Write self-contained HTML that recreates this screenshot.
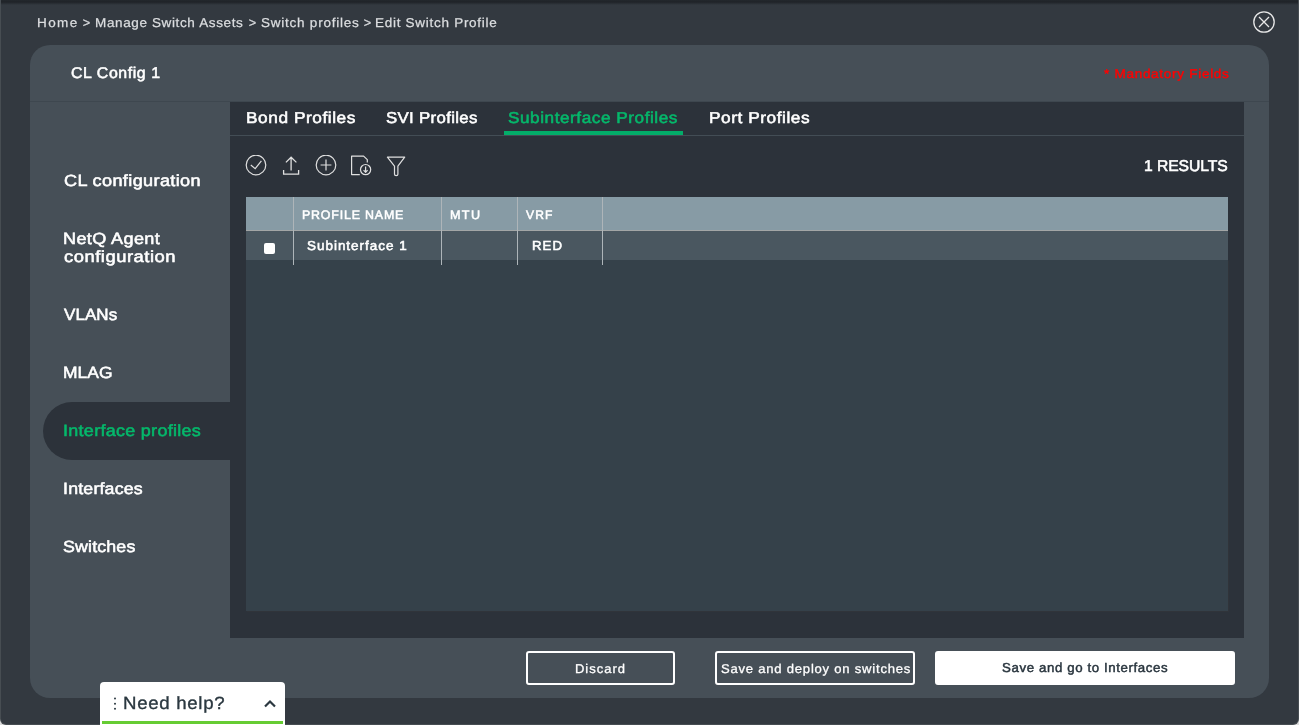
<!DOCTYPE html>
<html><head><meta charset="utf-8">
<style>
*{margin:0;padding:0;box-sizing:border-box;}
html,body{width:1299px;height:725px;overflow:hidden;background:#dcdcdc;font-family:"Liberation Sans",sans-serif;color:#fff;}
.a{position:absolute;}
.t{white-space:nowrap;line-height:20px;transform:translateZ(0);text-rendering:geometricPrecision;}
#frame{left:0;top:0;width:1299px;height:725px;background:#474d52;border-radius:0 0 6px 6px;}
#modal{left:1px;top:0;width:1297px;height:724px;background:#333940;border-radius:0 0 5px 5px;}
#topband{left:1px;top:0;width:1297px;height:6px;background:linear-gradient(#23282d 0,#1f2328 2px,#333940 5px);}
#close{left:1253.3px;top:10.7px;width:22px;height:22px;}
#card{left:30px;top:45px;width:1239px;height:653px;background:#464f57;border-radius:20px;}
#hdrline{left:30px;top:101px;width:1239px;height:1px;background:#3e474f;}
#panel{left:230px;top:102px;width:1014px;height:536px;background:#2c323a;}
#pill{left:43px;top:402px;width:187px;height:58px;background:#2c323a;border-radius:29px 0 0 29px;}
#tabline{left:230px;top:135px;width:1014px;height:1px;background:#434d55;}
#tabul{left:504px;top:131px;width:179px;height:4px;background:#03ad69;}
#thead{left:246px;top:197px;width:982px;height:34px;background:#879ba5;}
#trow{left:246px;top:231px;width:982px;height:29px;background:#4a5760;}
#rline{left:246px;top:230px;width:982px;height:1px;background:#a3a6a6;}
#tbody{left:246px;top:260px;width:982px;height:351px;background:#35414a;box-shadow:1px 1px 0 #30343a;}
.vl{top:197px;width:1px;height:68px;background:#aeb5b9;}
#cb{left:264px;top:243px;width:11px;height:11px;background:#fff;border-radius:2px;}
.btn{top:651px;height:34px;border:2px solid #fff;border-radius:3px;}
#help{left:100.4px;top:681.8px;width:184.4px;height:50px;background:#fff;border-radius:4px;}
#helpbar{left:102px;top:721px;width:181px;height:3px;background:#66cc33;}
.ic{top:155px;width:22px;height:22px;}
</style></head><body>
<div class="a" id="frame"></div>
<div class="a" id="modal"></div>
<div class="a" id="topband"></div>
<svg class="a" id="close" viewBox="0 0 22 22"><circle cx="11" cy="11" r="10.2" fill="none" stroke="#e8e8e8" stroke-width="1.3"/><path d="M6 6L16 16M16 6L6 16" stroke="#e8e8e8" stroke-width="1.3"/></svg>
<div class="a" id="card"></div>
<div class="a" id="hdrline"></div>
<div class="a" id="pill"></div>
<div class="a" id="panel"></div>
<div class="a" id="tabline"></div>
<div class="a" id="tabul"></div>
<svg class="a ic" style="left:245px" viewBox="0 0 22 22" fill="none" stroke="#e0e0e0" stroke-width="1.2"><circle cx="11" cy="10" r="9.8"/><path d="M5.8 10L10.2 13.6L16.4 5.9"/></svg>
<svg class="a ic" style="left:281px" viewBox="0 0 22 22" fill="none" stroke="#e0e0e0" stroke-width="1.3"><path d="M10.1 2V15.4M4.9 7.4L10.1 2.2L15.4 7.4M2.6 15V19.2H17.6V15"/></svg>
<svg class="a ic" style="left:315px" viewBox="0 0 22 22" fill="none" stroke="#e0e0e0" stroke-width="1.2"><circle cx="11" cy="10" r="9.8"/><path d="M11 4.6V15.4M5.6 10H16.4"/></svg>
<svg class="a ic" style="left:350px" viewBox="0 0 22 22" fill="none" stroke="#e0e0e0" stroke-width="1.2" stroke-linejoin="round"><path d="M9.8 19.6H1.6V1.1H13.6L17.3 4.6V7.6"/><circle cx="15.6" cy="14.6" r="5.1"/><path d="M15.6 11.4V17M13.6 15.2L15.6 17.3L17.6 15.2"/></svg>
<svg class="a ic" style="left:386px" viewBox="0 0 22 22" fill="none" stroke="#e0e0e0" stroke-width="1.2" stroke-linejoin="round"><path d="M1.4 2.1H18.7L11.9 11.1V19.2Q11.9 20.6 10.2 20.6Q8.5 20.6 8.5 19.2V11.1Z"/></svg>
<div class="a" id="thead"></div>
<div class="a" id="trow"></div>
<div class="a" id="tbody"></div>
<div class="a" id="rline"></div>
<div class="a vl" style="left:293px"></div>
<div class="a vl" style="left:441px"></div>
<div class="a vl" style="left:517px"></div>
<div class="a vl" style="left:602px"></div>
<div class="a" id="cb"></div>
<div class="a btn" style="left:526px;width:149px"></div>
<div class="a btn" style="left:715px;width:200px"></div>
<div class="a btn" style="left:935px;width:300px;background:#fff"></div>
<div class="a" id="help"></div>
<div class="a" id="helpbar"></div>
<svg class="a" style="left:112px;top:696px;width:6px;height:16px" viewBox="0 0 6 16"><circle cx="3" cy="2.6" r="1.0" fill="#2b3840"/><circle cx="3" cy="7.7" r="1.0" fill="#2b3840"/><circle cx="3" cy="12.8" r="1.0" fill="#2b3840"/></svg>
<svg class="a" style="left:262px;top:698px;width:16px;height:12px" viewBox="0 0 16 12"><path d="M3 8.5L8 3.5L13 8.5" fill="none" stroke="#2b3840" stroke-width="2.2"/></svg>
<div class="a t" id="bc1" style="left:36.94px;top:13.10px;font-size:12.80px;font-weight:400;color:#dcdee0;letter-spacing:1.337px;transform:translateZ(0) scaleX(1.0561);transform-origin:0 50%;-webkit-text-stroke:0.25px #dcdee0;">Home</div>
<div class="a t" id="bc2" style="left:82.78px;top:13.10px;font-size:12.80px;font-weight:400;color:#dcdee0;letter-spacing:0.000px;-webkit-text-stroke:0.25px #dcdee0;">&gt;</div>
<div class="a t" id="bc3" style="left:94.96px;top:13.10px;font-size:12.80px;font-weight:400;color:#dcdee0;letter-spacing:0.591px;transform:translateZ(0) scaleX(1.0561);transform-origin:0 50%;-webkit-text-stroke:0.25px #dcdee0;">Manage Switch Assets</div>
<div class="a t" id="bc4" style="left:248.68px;top:13.10px;font-size:12.80px;font-weight:400;color:#dcdee0;letter-spacing:0.000px;-webkit-text-stroke:0.25px #dcdee0;">&gt;</div>
<div class="a t" id="bc5" style="left:260.72px;top:13.10px;font-size:12.80px;font-weight:400;color:#dcdee0;letter-spacing:0.716px;transform:translateZ(0) scaleX(1.0561);transform-origin:0 50%;-webkit-text-stroke:0.25px #dcdee0;">Switch profiles</div>
<div class="a t" id="bc6" style="left:363.70px;top:13.10px;font-size:12.80px;font-weight:400;color:#dcdee0;letter-spacing:0.000px;-webkit-text-stroke:0.25px #dcdee0;">&gt;</div>
<div class="a t" id="bc7" style="left:375.00px;top:13.10px;font-size:12.80px;font-weight:400;color:#dcdee0;letter-spacing:0.675px;transform:translateZ(0) scaleX(1.0561);transform-origin:0 50%;-webkit-text-stroke:0.25px #dcdee0;">Edit Switch Profile</div>
<div class="a t" id="title" style="left:70.88px;top:63.75px;font-size:15.50px;font-weight:400;color:#ffffff;letter-spacing:0.555px;transform:translateZ(0) scaleX(1.0248);transform-origin:0 50%;-webkit-text-stroke:0.55px #ffffff;">CL Config 1</div>
<div class="a t" id="mand" style="left:1104.16px;top:64.00px;font-size:12.75px;font-weight:400;color:#ff0000;letter-spacing:0.666px;transform:translateZ(0) scaleX(1.0614);transform-origin:0 50%;-webkit-text-stroke:0.4px #ff0000;">* Mandatory Fields</div>
<div class="a t" id="tab1" style="left:245.62px;top:108.91px;font-size:15.75px;font-weight:400;color:#ffffff;letter-spacing:0.517px;transform:translateZ(0) scaleX(1.0953);transform-origin:0 50%;-webkit-text-stroke:0.55px #ffffff;">Bond Profiles</div>
<div class="a t" id="tab2" style="left:385.80px;top:108.70px;font-size:15.75px;font-weight:400;color:#ffffff;letter-spacing:0.304px;transform:translateZ(0) scaleX(1.0665);transform-origin:0 50%;-webkit-text-stroke:0.55px #ffffff;">SVI Profiles</div>
<div class="a t" id="tab3" style="left:508.44px;top:108.80px;font-size:15.75px;font-weight:400;color:#05b86b;letter-spacing:0.503px;transform:translateZ(0) scaleX(1.0901);transform-origin:0 50%;-webkit-text-stroke:0.55px #05b86b;">Subinterface Profiles</div>
<div class="a t" id="tab4" style="left:708.82px;top:108.80px;font-size:15.75px;font-weight:400;color:#ffffff;letter-spacing:0.510px;transform:translateZ(0) scaleX(1.0944);transform-origin:0 50%;-webkit-text-stroke:0.55px #ffffff;">Port Profiles</div>
<div class="a t" id="res" style="left:1144.18px;top:156.90px;font-size:15.60px;font-weight:400;color:#ffffff;letter-spacing:-0.081px;transform:translateZ(0) scaleX(1.0079);transform-origin:0 50%;-webkit-text-stroke:0.55px #ffffff;">1 RESULTS</div>
<div class="a t" id="nav1" style="left:63.52px;top:170.91px;font-size:16.20px;font-weight:400;color:#ffffff;letter-spacing:0.326px;transform:translateZ(0) scaleX(1.1183);transform-origin:0 50%;-webkit-text-stroke:0.55px #ffffff;">CL configuration</div>
<div class="a t" id="nav2a" style="left:62.72px;top:228.72px;font-size:16.20px;font-weight:400;color:#ffffff;letter-spacing:0.339px;transform:translateZ(0) scaleX(1.1157);transform-origin:0 50%;-webkit-text-stroke:0.55px #ffffff;">NetQ Agent</div>
<div class="a t" id="nav2b" style="left:63.52px;top:246.72px;font-size:16.20px;font-weight:400;color:#ffffff;letter-spacing:0.459px;transform:translateZ(0) scaleX(1.1364);transform-origin:0 50%;-webkit-text-stroke:0.55px #ffffff;">configuration</div>
<div class="a t" id="nav3" style="left:63.52px;top:304.72px;font-size:16.20px;font-weight:400;color:#ffffff;letter-spacing:0.070px;transform:translateZ(0) scaleX(1.0489);transform-origin:0 50%;-webkit-text-stroke:0.55px #ffffff;">VLANs</div>
<div class="a t" id="nav4" style="left:62.72px;top:362.72px;font-size:16.20px;font-weight:400;color:#ffffff;letter-spacing:0.023px;transform:translateZ(0) scaleX(1.0757);transform-origin:0 50%;-webkit-text-stroke:0.55px #ffffff;">MLAG</div>
<div class="a t" id="nav5" style="left:63.00px;top:420.72px;font-size:16.20px;font-weight:400;color:#05b86b;letter-spacing:0.272px;transform:translateZ(0) scaleX(1.1086);transform-origin:0 50%;-webkit-text-stroke:0.55px #05b86b;">Interface profiles</div>
<div class="a t" id="nav6" style="left:63.00px;top:478.72px;font-size:16.20px;font-weight:400;color:#ffffff;letter-spacing:0.188px;transform:translateZ(0) scaleX(1.0947);transform-origin:0 50%;-webkit-text-stroke:0.55px #ffffff;">Interfaces</div>
<div class="a t" id="nav7" style="left:62.80px;top:536.72px;font-size:16.20px;font-weight:400;color:#ffffff;letter-spacing:0.160px;transform:translateZ(0) scaleX(1.0973);transform-origin:0 50%;-webkit-text-stroke:0.55px #ffffff;">Switches</div>
<div class="a t" id="th1" style="left:302.16px;top:204.81px;font-size:12.40px;font-weight:400;color:#ffffff;letter-spacing:0.827px;transform:translateZ(0) scaleX(0.9995);transform-origin:0 50%;-webkit-text-stroke:0.55px #ffffff;">PROFILE NAME</div>
<div class="a t" id="th2" style="left:449.80px;top:204.61px;font-size:12.40px;font-weight:400;color:#ffffff;letter-spacing:1.336px;transform:translateZ(0) scaleX(1.0178);transform-origin:0 50%;-webkit-text-stroke:0.55px #ffffff;">MTU</div>
<div class="a t" id="th3" style="left:525.62px;top:204.61px;font-size:12.40px;font-weight:400;color:#ffffff;letter-spacing:1.131px;transform:translateZ(0) scaleX(0.9745);transform-origin:0 50%;-webkit-text-stroke:0.55px #ffffff;">VRF</div>
<div class="a t" id="td1" style="left:306.98px;top:236.01px;font-size:13.00px;font-weight:400;color:#ffffff;letter-spacing:0.954px;transform:translateZ(0) scaleX(1.0351);transform-origin:0 50%;-webkit-text-stroke:0.55px #ffffff;">Subinterface 1</div>
<div class="a t" id="td2" style="left:531.70px;top:235.71px;font-size:13.00px;font-weight:400;color:#ffffff;letter-spacing:1.026px;transform:translateZ(0) scaleX(1.0171);transform-origin:0 50%;-webkit-text-stroke:0.55px #ffffff;">RED</div>
<div class="a t" id="b1" style="left:575.36px;top:658.80px;font-size:12.70px;font-weight:400;color:#ffffff;letter-spacing:0.969px;transform:translateZ(0) scaleX(1.0236);transform-origin:0 50%;-webkit-text-stroke:0.3px #ffffff;">Discard</div>
<div class="a t" id="b2" style="left:720.70px;top:658.80px;font-size:12.70px;font-weight:400;color:#ffffff;letter-spacing:0.753px;transform:translateZ(0) scaleX(1.0294);transform-origin:0 50%;-webkit-text-stroke:0.3px #ffffff;">Save and deploy on switches</div>
<div class="a t" id="b3" style="left:1001.80px;top:658.41px;font-size:13.00px;font-weight:400;color:#28343d;letter-spacing:0.591px;transform:translateZ(0) scaleX(1.0201);transform-origin:0 50%;-webkit-text-stroke:0.45px #28343d;">Save and go to Interfaces</div>
<div class="a t" id="helptxt" style="left:122.72px;top:693.40px;font-size:17.70px;font-weight:400;color:#2b3840;letter-spacing:0.656px;transform:translateZ(0) scaleX(1.0547);transform-origin:0 50%;-webkit-text-stroke:0.35px #2b3840;">Need help?</div>
</body></html>
